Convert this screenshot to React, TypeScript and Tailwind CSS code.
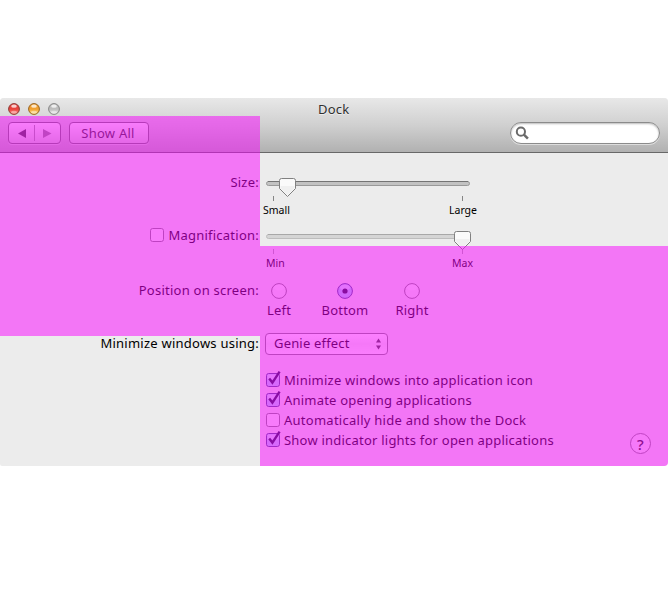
import React from "react";

const control =
  "border border-[#858585] bg-linear-to-b from-white via-[#f0f0f0] to-[#fbfbfb]";
const toolbarControl =
  "border border-[#747474] bg-linear-to-b from-[#f8f8f8] to-[#cfcfcf] shadow-[0_1px_0_#ffffff55]";

function Light({ id, hue, dark, rim }: { id: string; hue: string; dark: string; rim: string }) {
  return (
    <svg width="12" height="12" viewBox="0 0 12 12">
      <defs>
        <linearGradient id={id} x1="0" y1="0" x2="0" y2="1">
          <stop offset="0" stopColor={dark} />
          <stop offset=".5" stopColor={dark} />
          <stop offset="1" stopColor={hue} />
        </linearGradient>
      </defs>
      <circle cx="6" cy="6" r="5.4" fill={`url(#${id})`} stroke={rim} />
      <ellipse cx="6" cy="3.2" rx="2.8" ry="1.6" fill="#fff" opacity=".75" />
      <ellipse cx="6" cy="9.2" rx="3" ry="1.4" fill="#fff" opacity=".4" />
    </svg>
  );
}

function Slider({ value, strong }: { value: number; strong?: boolean }) {
  return (
    <svg className="block" width="208" height="26" viewBox="0 0 208 26">
      <rect x=".5" y="5.5" width="203" height="4" rx="2" fill={strong ? "#c2c2c2" : "#d5d5d5"} stroke={strong ? "#999" : "#bdbdbd"} />
      <path d="M2 5.5h200" stroke={strong ? "#747474" : "#a8a8a8"} />
      <path d="M7.5 20v5M196.5 20v5" stroke={strong ? "#858585" : "#a8a8a8"} />
      <g transform={`translate(${value} 2)`}>
        <path d="M-6 .5h12q2 0 2 2v8L0 18.5l-8-8v-8q0-2 2-2Z" fill="#fafafa" stroke="#808080" />
        <path d="M-7 8H7v2.3L0 17.2l-7-6.9Z" fill="#f0f0f0" />
      </g>
    </svg>
  );
}

function Check({ on }: { on?: boolean }) {
  return (
    <svg className="block shrink-0 overflow-visible" width="14" height="14" viewBox="0 0 14 14">
      <rect x=".5" y=".5" width="13" height="13" rx="2.2" fill={on ? "#b5d2f6" : "#f6f6f6"} stroke={on ? "#4b508f" : "#858585"} />
      {on && <rect x="1.5" y="1.5" width="11" height="5" rx="1" fill="#e5effb" opacity=".65" />}
      {on && <path d="M3.2 5.6l3.2 4L13.6-1.3" fill="none" stroke="#1b1b48" strokeWidth="2.4" />}
    </svg>
  );
}

function Radio({ on }: { on?: boolean }) {
  return (
    <svg className="block" width="16" height="16" viewBox="0 0 16 16">
      <circle cx="8" cy="8" r="7.4" fill={on ? "#a9cef6" : "#f1f1f1"} stroke={on ? "#4b508f" : "#808080"} />
      <ellipse cx="8" cy="4.5" rx="5" ry="3" fill="#fff" opacity=".45" />
      {on && <circle cx="8" cy="8" r="2.6" fill="#181840" />}
    </svg>
  );
}

const options: [string, boolean, string][] = [
  ["Minimize windows into application icon", true, "tracking-[0.25px]"],
  ["Animate opening applications", true, "tracking-[0.2px]"],
  ["Automatically hide and show the Dock", false, "tracking-[0.26px]"],
  ["Show indicator lights for open applications", true, "tracking-[0.22px]"],
];

const positions: [string, boolean, string][] = [
  ["Left", false, "w-[28px]"],
  ["Bottom", true, "w-[104px]"],
  ["Right", false, "w-[30px]"],
];

function Label({ children }: { children: React.ReactNode }) {
  return (
    <div className="flex h-5 w-[259px] shrink-0 items-center justify-end gap-[4px] whitespace-nowrap tracking-[0.24px]">
      {children}
    </div>
  );
}

export default function App() {
  return (
    <div className="h-[601px] w-[668px] overflow-hidden bg-white pt-[98px] font-['Noto_Sans','Open_Sans',sans-serif] text-[13px] leading-5 tracking-[0.18px] text-black">
      <div className="relative h-[368px] overflow-hidden rounded-t-[4px] rounded-br-[4px] rounded-bl-[2px] bg-[#ececec]">
        <header className="h-[55px] border-b border-[#686868] bg-linear-to-b from-[#e8e8e8] via-[#d0d0d0] to-[#b1b1b1]">
          <div className="flex h-[22px] items-center">
            <div className="flex w-[318px] gap-2 pl-2">
              <Light id="close" hue="#ff8b80" dark="#e8423c" rim="#8a3a35" />
              <Light id="minimize" hue="#ffe58c" dark="#f0a030" rim="#96621f" />
              <Light id="zoom" hue="#e8e8e8" dark="#bdbdbd" rim="#858585" />
            </div>
            <span className="text-[#303030] [text-shadow:0_1px_0_#eee]">Dock</span>
          </div>
          <div className="flex items-start pt-[2px] pr-2 pl-2">
            <div className={`flex h-[22px] w-[53px] items-center rounded-[4px] ${toolbarControl}`}>
              <svg width="51" height="20" viewBox="0 0 51 20">
                <path d="M17 6v9l-8-4.5Z" fill="#444" />
                <path d="M34 6v9l8.5-4.5Z" fill="#888" />
                <path d="M25.5 2v16" stroke="#999" />
              </svg>
            </div>
            <button className={`ml-2 h-[22px] w-[80px] rounded-[4px] text-[#333] ${toolbarControl}`}>
              <span className="-ml-[2px] block leading-5 tracking-[0.26px]">Show All</span>
            </button>
            <div className="ml-auto flex h-[22px] w-[150px] items-center rounded-full border border-[#8b8b8b] bg-white pl-[4px] shadow-[inset_0_1px_2px_#bbb,0_1px_0_#ddd]">
              <svg width="14" height="14" viewBox="0 0 14 14" fill="none" stroke="#6b6b6b">
                <circle cx="5.9" cy="5.7" r="4.1" strokeWidth="2" />
                <path d="m8.9 8.7 4 4" strokeWidth="2.5" />
              </svg>
            </div>
          </div>
        </header>

        <main>
          <div className="flex h-[53px] pt-[19px]">
            <Label>Size:</Label>
            <div className="ml-[7px] pt-1">
              <Slider value={21.5} strong />
              <div className="-ml-[3px] flex w-[214px] justify-between pt-[2px] text-[10.5px] leading-[13px] tracking-normal">
                <span>Small</span><span>Large</span>
              </div>
            </div>
          </div>
          <div className="flex h-[74px] pt-[19px]">
            <Label><Check /><span>Magnification:</span></Label>
            <div className="ml-[7px] pt-1">
              <Slider value={196.5} />
              <div className="flex w-[207px] justify-between pt-[2px] text-[10.5px] leading-[13px] tracking-normal">
                <span>Min</span><span>Max</span>
              </div>
            </div>
          </div>
          <div className="flex h-[53px]">
            <Label>Position on screen:</Label>
            <div className="ml-[6px] flex pt-[3px]">
              {positions.map(([name, on, width]) => (
                <div key={name} className={`flex flex-col items-center ${width}`}>
                  <Radio on={on} />
                  <span className="pt-[1px]">{name}</span>
                </div>
              ))}
            </div>
          </div>
          <div className="flex h-[37px]">
            <Label>Minimize windows using:</Label>
            <div className={`ml-[6px] flex h-[22px] w-[123px] items-center justify-between rounded-[4px] pr-[5px] pl-2 ${control}`}>
              <span className="-mt-[2px]">Genie effect</span>
              <svg width="7" height="12" viewBox="0 0 7 12" fill="#444"><path d="M1 4.5 3.5 .5 6 4.5ZM1 7.5 3.5 11.5 6 7.5Z" /></svg>
            </div>
          </div>
          <div className="flex">
            <div className="ml-[266px]">
              {options.map(([name, on, spacing]) => (
                <div key={name} className={`flex h-5 items-center gap-[4px] whitespace-nowrap ${spacing}`}>
                  <Check on={on} /><span>{name}</span>
                </div>
              ))}
            </div>
            <div className="mt-[63px] mr-[17px] ml-auto flex size-[21px] items-center justify-center rounded-full border border-[#858585] bg-[#f3f3f3] text-[15px] font-medium text-[#222]">?</div>
          </div>
        </main>
        <div className="absolute top-[18px] left-0 h-[220px] w-[260px] bg-[#fa00ff]/50" />
        <div className="absolute top-[148px] left-[260px] h-[220px] w-[408px] bg-[#fa00ff]/50" />
      </div>
    </div>
  );
}
